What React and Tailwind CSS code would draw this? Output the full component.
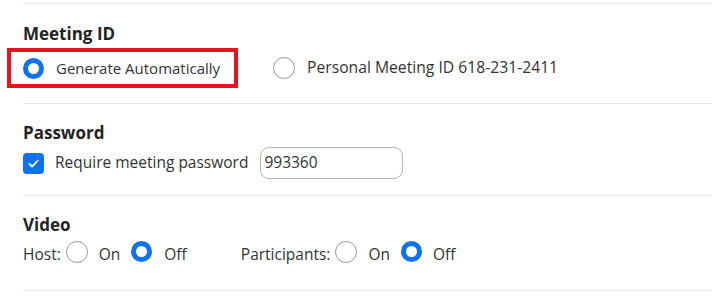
// Meeting settings panel: meeting ID, password and video options

const font = { fontFamily: '"Open Sans", "Noto Sans", sans-serif' };

function Radio({ checked }) {
  if (checked) {
    return <span className="inline-block w-[21px] h-[21px] shrink-0 rounded-full border-[5px] border-[#0e72ed] bg-white" />;
  }
  return <span className="inline-block w-[22px] h-[22px] shrink-0 rounded-full border-[1.5px] border-[#9a9a9a] bg-white" />;
}

function Checkbox() {
  return (
    <span className="flex w-[21px] h-[21px] shrink-0 items-center justify-center rounded-[4px] bg-[#0e72ed]">
      <svg width="13" height="13" viewBox="0 0 14 14" fill="none">
        <path d="M2.5 7.3 L5.6 10.3 L11.5 3.8" stroke="white" strokeWidth="1.8" strokeLinecap="round" strokeLinejoin="round" />
      </svg>
    </span>
  );
}

function Heading({ children }) {
  return <div className="text-[17px] leading-[22px] font-bold text-[#232323]">{children}</div>;
}

export default function App() {
  return (
    <div className="w-[719px] h-[300px] bg-white overflow-hidden text-[#333333]" style={font}>
      <div className="ml-[23px] w-[689px] pt-[3px]">
        {/* Meeting ID */}
        <section className="border-t-[1.5px] border-[#e9e9e9] h-[100px]">
          <div className="pt-[19px]">
            <Heading>Meeting ID</Heading>
          </div>
          <div className="mt-[3px] flex items-center text-[15.5px]">
            <div className="ml-[-16px] w-[231px] h-[40px] border-[4px] border-[#e5141f] flex items-center pl-[12px] gap-[12px]">
              <Radio checked />
              <span className="text-[15px]">Generate Automatically</span>
            </div>
            <div className="ml-[35px] flex items-center gap-[12px]">
              <Radio />
              <span className="text-[15.7px]">Personal Meeting ID 618-231-2411</span>
            </div>
          </div>
        </section>

        {/* Password */}
        <section className="border-t-[1.5px] border-[#e9e9e9] h-[92px]">
          <div className="pt-[18px]">
            <Heading>Password</Heading>
          </div>
          <div className="mt-[3px] flex items-center text-[15.5px]">
            <Checkbox />
            <span className="ml-[11px]">Require meeting password</span>
            <div className="ml-[12px] w-[143px] h-[32px] rounded-[9px] border-[1.5px] border-[#b4b4b4] flex items-center px-[3px] text-[15.5px] text-[#333333]">
              993360
            </div>
          </div>
        </section>

        {/* Video */}
        <section className="border-t-[1.5px] border-[#e9e9e9] h-[95px]">
          <div className="pt-[18px]">
            <Heading>Video</Heading>
          </div>
          <div className="mt-[7px] flex items-center text-[15.5px] h-[24px]">
            <span>Host:</span>
            <span className="ml-[5px]"><Radio /></span>
            <span className="ml-[11px]">On</span>
            <span className="ml-[11px]"><Radio checked /></span>
            <span className="ml-[12px]">Off</span>
            <span className="ml-[54px]">Participants:</span>
            <span className="ml-[5px]"><Radio /></span>
            <span className="ml-[11px]">On</span>
            <span className="ml-[11px]"><Radio checked /></span>
            <span className="ml-[11px]">Off</span>
          </div>
        </section>

        <div className="border-t-[1.5px] border-[#e9e9e9]" />
      </div>
    </div>
  );
}
